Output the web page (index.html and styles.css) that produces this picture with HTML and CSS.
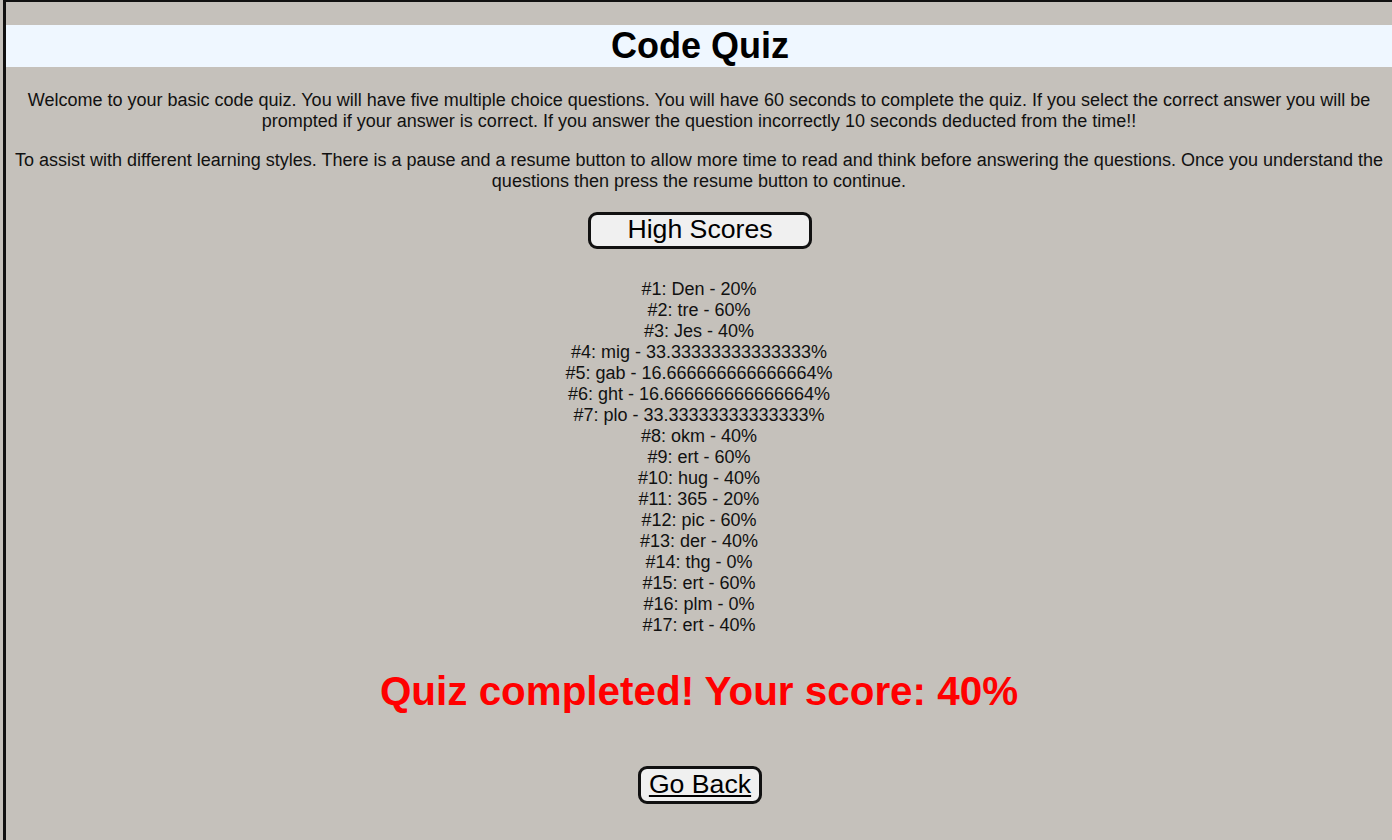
FILE: index.html
```html
<!DOCTYPE html>
<html lang="en">
<head>
<meta charset="utf-8">
<title>Code Quiz</title>
<link rel="stylesheet" href="styles.css">
</head>
<body>
<div class="page">
  <header class="site-header">
    <h1 class="title">Code Quiz</h1>
  </header>
  <main class="content">
    <p class="intro">Welcome to your basic code quiz. You will have five multiple choice questions. You will have 60 seconds to complete the quiz. If you select the correct answer you will be prompted if your answer is correct. If you answer the question incorrectly 10 seconds deducted from the time!!</p>
    <p class="intro">To assist with different learning styles. There is a pause and a resume button to allow more time to read and think before answering the questions. Once you understand the questions then press the resume button to continue.</p>
    <button class="btn btn-scores" type="button">High Scores</button>
    <ul class="scores">
      <li>#1: Den - 20%</li>
      <li>#2: tre - 60%</li>
      <li>#3: Jes - 40%</li>
      <li>#4: mig - 33.33333333333333%</li>
      <li>#5: gab - 16.666666666666664%</li>
      <li>#6: ght - 16.666666666666664%</li>
      <li>#7: plo - 33.33333333333333%</li>
      <li>#8: okm - 40%</li>
      <li>#9: ert - 60%</li>
      <li>#10: hug - 40%</li>
      <li>#11: 365 - 20%</li>
      <li>#12: pic - 60%</li>
      <li>#13: der - 40%</li>
      <li>#14: thg - 0%</li>
      <li>#15: ert - 60%</li>
      <li>#16: plm - 0%</li>
      <li>#17: ert - 40%</li>
    </ul>
    <h2 class="result">Quiz completed! Your score: 40%</h2>
    <button class="btn btn-back" type="button"><a href="#" class="back-link">Go Back</a></button>
  </main>
</div>
</body>
</html>
```
FILE: styles.css
```css
html, body {
  margin: 0;
  padding: 0;
  background: #c5c1bb;
}

body {
  font-family: "Liberation Sans", Arial, sans-serif;
  color: #111;
}

.page {
  margin-left: 3px;
  border-top: 2px solid #111;
  border-left: 3px solid #111;
  min-height: 100vh;
  box-sizing: border-box;
  padding-top: 23px;
}

.site-header {
  background: #eff7ff;
}

.title {
  margin: 0;
  height: 42px;
  line-height: 42px;
  font-size: 36px;
  font-weight: bold;
  text-align: center;
  color: #000;
  padding-left: 2px;
}

.content {
  display: flex;
  flex-direction: column;
  align-items: center;
  text-align: center;
  padding-top: 23px;
}

.intro {
  margin: 0 0 18px;
  font-size: 18px;
  line-height: 21px;
  padding: 0 4px;
}

.btn {
  font-family: "Liberation Sans", Arial, sans-serif;
  font-size: 26.67px;
  background: #f0f0f0;
  border: 3px solid #111;
  border-radius: 9px;
  color: #000;
  padding: 0;
  cursor: pointer;
  box-sizing: border-box;
}

.btn-scores {
  width: 224px;
  height: 37px;
  line-height: 27px;
  padding-bottom: 3px;
  margin-top: 2px;
  margin-left: 2px;
}

.scores {
  list-style: none;
  margin: 30px 0 0;
  padding: 0;
  font-size: 18px;
  line-height: 21px;
}

.result {
  margin: 32px 0 0;
  font-size: 40.4px;
  line-height: 46px;
  font-weight: bold;
  color: #ff0000;
}

.btn-back {
  margin-top: 52px;
  height: 38px;
  width: 124px;
  line-height: 28px;
  padding-bottom: 2px;
  margin-left: 2px;
}

.back-link {
  color: #000;
  text-decoration: underline;
}
```
